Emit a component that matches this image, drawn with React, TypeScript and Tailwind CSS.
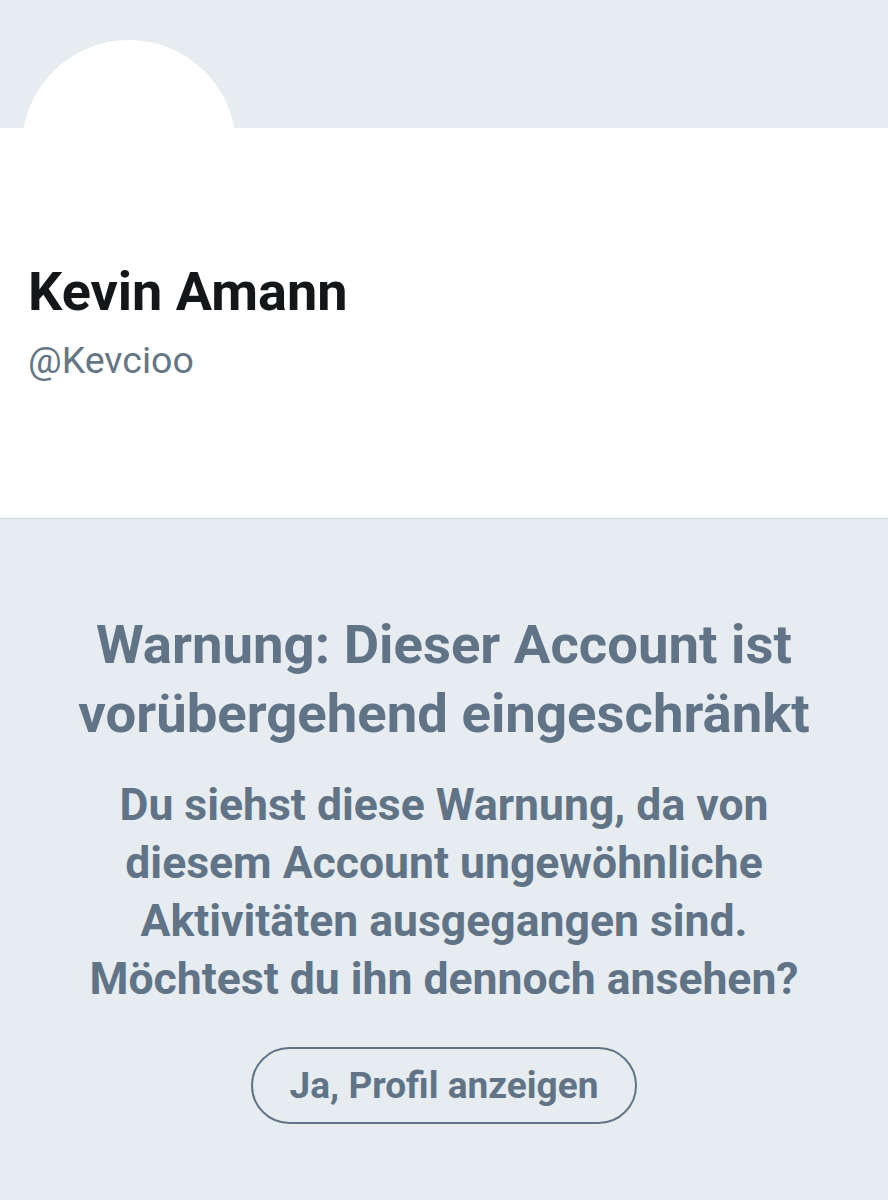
import React from 'react';

const App: React.FC = () => {
  return (
    <div className="w-[888px] h-[1200px] bg-[#e6ecf0] font-['Roboto',sans-serif] overflow-hidden">
      <div className="relative h-[128px]">
        <div className="absolute left-[22px] top-[40px] w-[214px] h-[214px] rounded-full bg-white" />
      </div>
      <div className="h-[391px] bg-white border-b border-[#ccd6dd] px-[28px] pt-[132px]">
        <h1 className="text-[54px] leading-[64px] font-bold text-[#14171a]">Kevin Amann</h1>
        <p className="text-[37.5px] leading-[46px] text-[#657786] mt-[13px]">@Kevcioo</p>
      </div>
      <div className="flex flex-col items-center text-center text-[#617487] mt-[91px]">
        <h2 className="text-[54.5px] leading-[69px] font-bold w-[780px]">
          Warnung: Dieser Account ist vorübergehend eingeschränkt
        </h2>
        <p className="text-[44.5px] leading-[58px] font-bold w-[740px] mt-[28px]">
          Du siehst diese Warnung, da von diesem Account ungewöhnliche Aktivitäten ausgegangen sind. Möchtest du ihn dennoch ansehen?
        </p>
        <button className="mt-[39px] w-[386px] h-[77px] rounded-full border-2 border-[#617487] text-[37px] font-bold text-[#617487]">
          Ja, Profil anzeigen
        </button>
      </div>
    </div>
  );
};

export default App;
